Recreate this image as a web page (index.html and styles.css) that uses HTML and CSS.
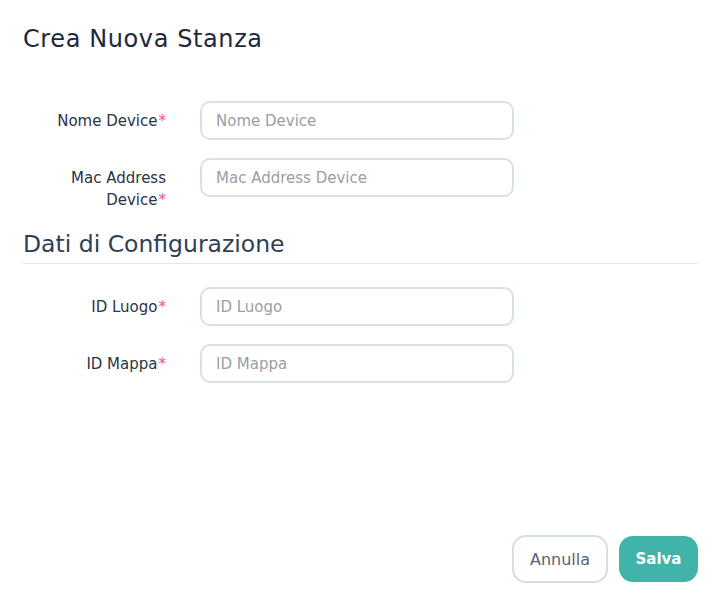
FILE: index.html
```html
<!DOCTYPE html>
<html lang="it">
<head>
<meta charset="utf-8">
<title>Crea Nuova Stanza</title>
<link rel="stylesheet" href="styles.css">
</head>
<body>
<div class="modal">
  <h1 class="title">Crea Nuova Stanza</h1>
  <form class="form">
    <div class="row">
      <label class="label">Nome Device<span class="req">*</span></label>
      <input class="input" type="text" placeholder="Nome Device">
    </div>
    <div class="row">
      <label class="label">Mac Address Device<span class="req">*</span></label>
      <input class="input" type="text" placeholder="Mac Address Device">
    </div>
    <h2 class="section">Dati di Configurazione</h2>
    <div class="row">
      <label class="label">ID Luogo<span class="req">*</span></label>
      <input class="input" type="text" placeholder="ID Luogo">
    </div>
    <div class="row">
      <label class="label">ID Mappa<span class="req">*</span></label>
      <input class="input" type="text" placeholder="ID Mappa">
    </div>
  </form>
  <div class="actions">
    <button class="btn btn-cancel" type="button">Annulla</button>
    <button class="btn btn-save" type="button">Salva</button>
  </div>
</div>
</body>
</html>
```
FILE: styles.css
```css
* { box-sizing: border-box; }
html, body { margin: 0; padding: 0; background: #fff; }
body {
  font-family: "DejaVu Sans", "Open Sans", sans-serif;
  color: #334155;
}
.modal {
  height: 600px;
  padding: 24px 25px 17px 23px;
  display: flex;
  flex-direction: column;
}
.title {
  margin: 0;
  font-size: 24px;
  line-height: 30px;
  letter-spacing: 0.6px;
  font-weight: 400;
  color: #1e293b;
}
.form {
  margin-top: 47px;
  display: flex;
  flex-direction: column;
}
.row {
  display: flex;
  align-items: flex-start;
  gap: 34px;
  margin-bottom: 18px;
}
.label {
  width: 143px;
  flex: none;
  text-align: right;
  font-size: 15px;
  line-height: 22px;
  padding-top: 9px;
  color: #2b3445;
}
.req { color: #f0518a; margin-left: 1px; }
.input {
  width: 314px;
  height: 39px;
  border: 2px solid #d8e0ea;
  border-radius: 10px;
  padding: 0 14px;
  font-family: inherit;
  font-size: 15px;
  color: #334155;
  outline: none;
  background: #fff;
}
.input::placeholder { color: #9a9ea6; }
.section {
  margin: 0 0 23px 0;
  padding-bottom: 4px;
  border-bottom: 1px solid #e5e7eb;
  font-size: 23.5px;
  line-height: 30px;
  font-weight: 400;
  color: #2f3e55;
}
.actions {
  margin-top: auto;
  display: flex;
  justify-content: flex-end;
  gap: 11px;
}
.btn {
  height: 48px;
  border-radius: 14px;
  font-family: inherit;
  font-size: 16px;
  cursor: pointer;
}
.btn-cancel {
  width: 96px;
  background: #fff;
  border: 2px solid #d6dee8;
  color: #5b6270;
}
.btn-save {
  width: 79px;
  height: 46px;
  margin-top: 1px;
  background: #40b4a8;
  border: none;
  color: #fff;
  font-weight: 600;
  font-size: 15px;
}
```
